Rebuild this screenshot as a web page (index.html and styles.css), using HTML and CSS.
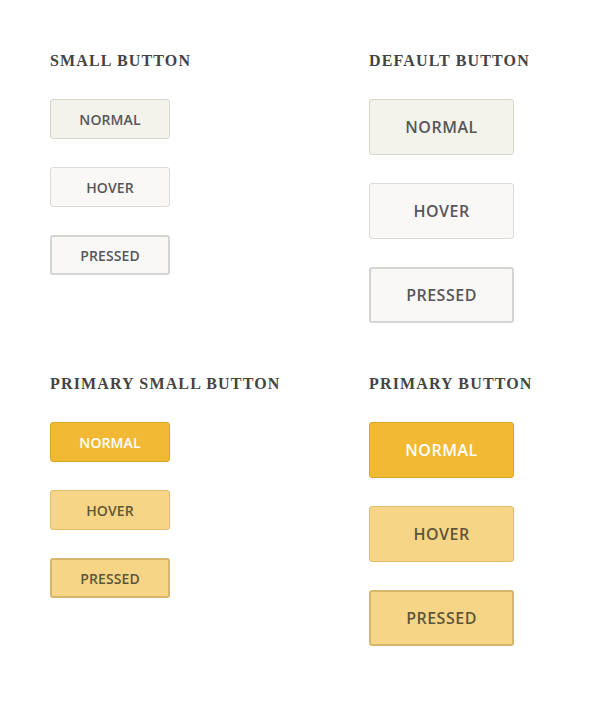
FILE: index.html
```html
<!DOCTYPE html>
<html>
<head>
<meta charset="utf-8">
<link rel="stylesheet" href="styles.css">
</head>
<body>
<div class="grid">
  <section class="group">
    <h2 class="title">Small Button</h2>
    <div class="stack stack-sm">
      <button class="btn btn-sm normal">Normal</button>
      <button class="btn btn-sm hover">Hover</button>
      <button class="btn btn-sm pressed">Pressed</button>
    </div>
  </section>
  <section class="group">
    <h2 class="title">Default Button</h2>
    <div class="stack">
      <button class="btn btn-md normal">Normal</button>
      <button class="btn btn-md hover">Hover</button>
      <button class="btn btn-md pressed">Pressed</button>
    </div>
  </section>
  <section class="group">
    <h2 class="title">Primary Small Button</h2>
    <div class="stack">
      <button class="btn btn-sm primary normal">Normal</button>
      <button class="btn btn-sm primary hover">Hover</button>
      <button class="btn btn-sm primary pressed">Pressed</button>
    </div>
  </section>
  <section class="group">
    <h2 class="title">Primary Button</h2>
    <div class="stack">
      <button class="btn btn-md primary normal">Normal</button>
      <button class="btn btn-md primary hover">Hover</button>
      <button class="btn btn-md primary pressed">Pressed</button>
    </div>
  </section>
</div>
</body>
</html>
```
FILE: styles.css
```css
html, body {
  margin: 0;
  padding: 0;
  background: #ffffff;
}
.grid {
  display: grid;
  grid-template-columns: 319px auto;
  row-gap: 51px;
  padding: 51px 0 0 50px;
}
.title {
  margin: 0 0 28px 0;
  font-family: "Liberation Serif", "Times New Roman", serif;
  font-weight: bold;
  font-size: 16px;
  line-height: 20px;
  letter-spacing: 1.15px;
  text-transform: uppercase;
  color: #444444;
}
.stack {
  display: flex;
  flex-direction: column;
  align-items: flex-start;
  gap: 28px;
}
.btn {
  box-sizing: border-box;
  display: flex;
  align-items: center;
  justify-content: center;
  padding: 0;
  border-radius: 3px;
  font-family: "Open Sans", sans-serif;
  font-weight: 600;
  text-transform: uppercase;
  color: #57565a;
  cursor: pointer;
}
.btn-sm {
  width: 120px;
  height: 40px;
  font-size: 14px;
  letter-spacing: 0.1px;
}
.btn-md {
  width: 145px;
  height: 56px;
  font-size: 16px;
  letter-spacing: 0.5px;
}
.normal {
  background: #f3f2eb;
  border: 1px solid #d8d6cd;
}
.hover {
  background: #f9f8f6;
  border: 1px solid #dcdbd8;
}
.pressed {
  background: #f9f8f6;
  border: 2px solid #d4d4d2;
}
.primary {
  color: #5e5538;
}
.primary.normal {
  background: #f2b934;
  border: 1px solid #d9a52b;
  color: #ffffff;
}
.primary.hover {
  background: #f7d587;
  border: 1px solid #ddbd6c;
}
.primary.pressed {
  background: #f7d587;
  border: 2px solid #d5b66a;
}
```
